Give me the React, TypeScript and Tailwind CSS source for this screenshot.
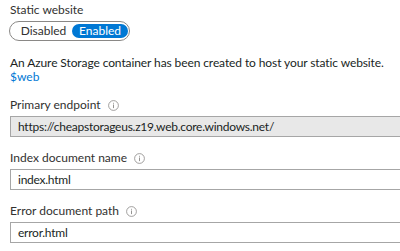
import React from "react";

const Info = () => (
  <svg width="11" height="11" viewBox="0 0 11 11" className="ml-[7px] shrink-0">
    <circle cx="5.5" cy="5.5" r="4.9" fill="none" stroke="#8a8886" strokeWidth="0.8" />
    <rect x="5.05" y="4.5" width="0.9" height="3.6" fill="#8a8886" />
    <rect x="5.05" y="2.8" width="0.9" height="0.9" fill="#8a8886" />
  </svg>
);

const Field = ({ label, value, disabled }: { label: string; value: string; disabled?: boolean }) => (
  <div className="flex flex-col">
    <div className="flex items-center h-[16px] text-[12px] leading-[16px] text-[#323130]">
      <span>{label}</span>
      <Info />
    </div>
    <div
      className={`mt-[3px] w-[420px] h-[21px] border border-[#a6a6a6] flex items-center pl-[7px] text-[12px] tracking-[-0.25px] text-[#201f1e] ${
        disabled ? "bg-[#e8e8e8]" : "bg-white"
      }`}
    >
      {value}
    </div>
  </div>
);

export default function App() {
  return (
    <div className="w-[400px] h-[251px] bg-white overflow-hidden text-[#323130] font-['Lato',sans-serif] pl-[10px] pt-[2px]">
      <div className="text-[12px] leading-[16px]">Static website</div>
      <div className="-ml-[1px] mt-[3px] w-[121px] h-[20px] rounded-full border border-[#8a8886] flex items-center pr-[1px]">
        <span className="w-[62px] text-center text-[12px] leading-[14px] text-[#323130] pl-[5px]">Disabled</span>
        <span className="w-[56px] h-[14px] rounded-full bg-[#0078d4] text-white text-[12px] leading-[14px] flex items-center justify-center">
          Enabled
        </span>
      </div>
      <div className="mt-[15px] text-[12px] leading-[14px] tracking-[-0.1px] whitespace-nowrap text-[#201f1e]">
        An Azure Storage container has been created to host your static website.
      </div>
      <div className="text-[12px] leading-[14px] text-[#0078d4]">$web</div>
      <div className="mt-[13px] flex flex-col gap-[13px]">
        <Field label="Primary endpoint" value="https://cheapstorageus.z19.web.core.windows.net/" disabled />
        <Field label="Index document name" value="index.html" />
        <Field label="Error document path" value="error.html" />
      </div>
    </div>
  );
}
